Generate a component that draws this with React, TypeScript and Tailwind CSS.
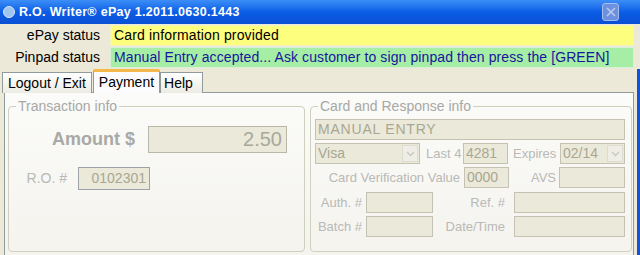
import React from 'react';

const field = 'h-[21px] border border-[#c4c2b2] bg-[#ebe9da] text-[14px] leading-[19px] text-[#a9a791] px-[2px] overflow-hidden whitespace-nowrap';
const label = 'text-[13px] leading-[21px] text-[#b9b9b5] whitespace-nowrap';

const Chevron: React.FC = () => (
  <svg width="9" height="6" viewBox="0 0 9 6" fill="none">
    <path d="M1 1 L4.5 4.5 L8 1" stroke="#c9c8bc" strokeWidth="1.3" />
  </svg>
);

const Select: React.FC<{ value: string; className: string }> = ({ value, className }) => (
  <div className={`${field} flex items-center justify-between pr-[1px] ${className}`}>
    <span>{value}</span>
    <span className="flex h-[17px] w-[16px] items-center justify-center border border-[#dedcd0] bg-[#efeee6]">
      <Chevron />
    </span>
  </div>
);

const App: React.FC = () => {
  return (
    <div className="relative h-[255px] w-[640px] overflow-hidden bg-[#ece9d8] font-['Liberation_Sans',Arial,sans-serif]">
      {/* Title bar */}
      <div className="flex h-[24px] items-center bg-linear-to-b from-[#3c8ef6] via-[#0b5de6] to-[#0a4fd4] pl-[3px] pr-[21px]">
        <span className="mr-[4px] h-[12px] w-[12px] rounded-full border border-[#d8e8fb] bg-[#9ec4f0]" />
        <span className="text-[12.5px] font-bold tracking-[0.3px] text-white">R.O. Writer® ePay 1.2011.0630.1443</span>
        <span className="ml-auto flex h-[18px] w-[17px] items-center justify-center rounded-[3px] border border-[#a4bcee] bg-[#6d90df]">
          <svg width="10" height="10" viewBox="0 0 10 10">
            <path d="M1 1 L9 9 M9 1 L1 9" stroke="#b9cbf0" strokeWidth="1.6" />
          </svg>
        </span>
      </div>

      {/* Status rows */}
      <div className="grid grid-cols-[110px_1fr] gap-y-[1px] pr-[6px] pt-[1px]">
        <div className="pr-[10px] text-right text-[14px] leading-[21px] text-black">ePay status</div>
        <div className="h-[21px] border border-[#f3f3c0] bg-[#fdfd7e] pl-[3px] text-[14px] leading-[19px] tracking-[0.15px] text-black">
          Card information provided
        </div>
        <div className="pr-[10px] text-right text-[14px] leading-[21px] text-black">Pinpad status</div>
        <div className="h-[21px] border border-[#d8f0d8] bg-[#a6eea6] pl-[3px] text-[14px] leading-[19px] tracking-[0.1px] text-[#16169a]">
          Manual Entry accepted... Ask customer to sign pinpad then press the [GREEN]
        </div>
      </div>

      <div className="border-r-[3px] border-[#1652d6]">
        {/* Tabs */}
        <div className="mt-[1px] flex items-end pl-[2px]">
          <div className="mb-[-1px] h-[21px] border border-b-0 border-[#919b9c] bg-linear-to-b from-white to-[#ecebe3] px-[5px] text-[14px] leading-[21px] text-black">
            Logout / Exit
          </div>
          <div className="relative z-10 mb-[-1px] ml-[1px] h-[24px] rounded-t-[2px] border-x border-[#919b9c] border-t-[3px] border-t-[#f5b84a] bg-[#fcfcfe] px-[5px] text-[14px] leading-[20px] text-black">
            Payment
          </div>
          <div className="mb-[-1px] h-[21px] border border-b-0 border-[#919b9c] bg-linear-to-b from-white to-[#ecebe3] pl-[3px] pr-[9px] text-[14px] leading-[21px] text-black">
            Help
          </div>
        </div>

        {/* Tab panel */}
        <div className="ml-[4px] mr-[3px] flex h-[170px] gap-[5px] border border-[#919b9c] bg-linear-to-b from-[#fbfbf9] to-[#f4f3ee] pl-[3px] pt-[5px]">
          {/* Transaction info */}
          <fieldset className="h-[154px] w-[297px] min-w-0 rounded-[4px] border border-[#d0d0bf] px-0">
            <legend className="ml-[7px] px-[2px] text-[14px] leading-[16px] text-[#a8a8a6]">Transaction info</legend>
            <div className="mt-[12px] flex items-center">
              <div className="w-[126px] text-right text-[18px] font-bold text-[#a9a9a5]">Amount $</div>
              <div className="ml-[13px] h-[27px] w-[139px] border border-[#b9b8a8] bg-[#ebe9da] pr-[4px] text-right text-[20px] leading-[25px] text-[#a9a89c]">
                2.50
              </div>
            </div>
            <div className="mt-[14px] flex items-center">
              <div className="w-[58px] text-right text-[14px] leading-[21px] text-[#b9b9b5]">R.O. #</div>
              <div className="ml-[11px] h-[23px] w-[72px] border border-[#9da2a8] bg-[#ebe9da] pr-[3px] text-right text-[14px] leading-[21px] text-[#a9a791]">
                0102301
              </div>
            </div>
          </fieldset>

          {/* Card and Response info */}
          <fieldset className="h-[154px] w-[322px] min-w-0 rounded-[4px] border border-[#d0d0bf] pl-[4px] pr-[6px]">
            <legend className="ml-[3px] px-[2px] text-[14px] leading-[16px] text-[#a8a8a6]">Card and Response info</legend>
            <div className="mt-[5px] flex flex-col gap-[3px]">
              <div className={`${field} w-[310px] tracking-[0.8px]`}>MANUAL ENTRY</div>
              <div className="flex items-center">
                <Select value="Visa" className="w-[105px]" />
                <span className={`${label} ml-[6px] w-[34px]`}>Last 4</span>
                <div className={`${field} ml-[3px] w-[45px]`}>4281</div>
                <span className={`${label} ml-[5px] w-[44px]`}>Expires</span>
                <Select value="02/14" className="ml-[3px] w-[65px]" />
              </div>
              <div className="flex items-center">
                <span className={`${label} w-[145px] text-right`}>Card Verification Value</span>
                <div className={`${field} ml-[4px] w-[45px]`}>0000</div>
                <span className={`${label} w-[47px] text-right`}>AVS</span>
                <div className={`${field} ml-[3px] w-[66px]`} />
              </div>
              <div className="flex items-center pt-[1px]">
                <span className={`${label} w-[47px] text-right`}>Auth. #</span>
                <div className={`${field} ml-[4px] w-[67px]`} />
                <span className={`${label} w-[72px] text-right`}>Ref. #</span>
                <div className={`${field} ml-[9px] w-[111px]`} />
              </div>
              <div className="flex items-center">
                <span className={`${label} w-[47px] text-right`}>Batch #</span>
                <div className={`${field} ml-[4px] w-[67px]`} />
                <span className={`${label} w-[72px] text-right`}>Date/Time</span>
                <div className={`${field} ml-[9px] w-[111px]`} />
              </div>
            </div>
          </fieldset>
        </div>
      </div>
    </div>
  );
};

export default App;
